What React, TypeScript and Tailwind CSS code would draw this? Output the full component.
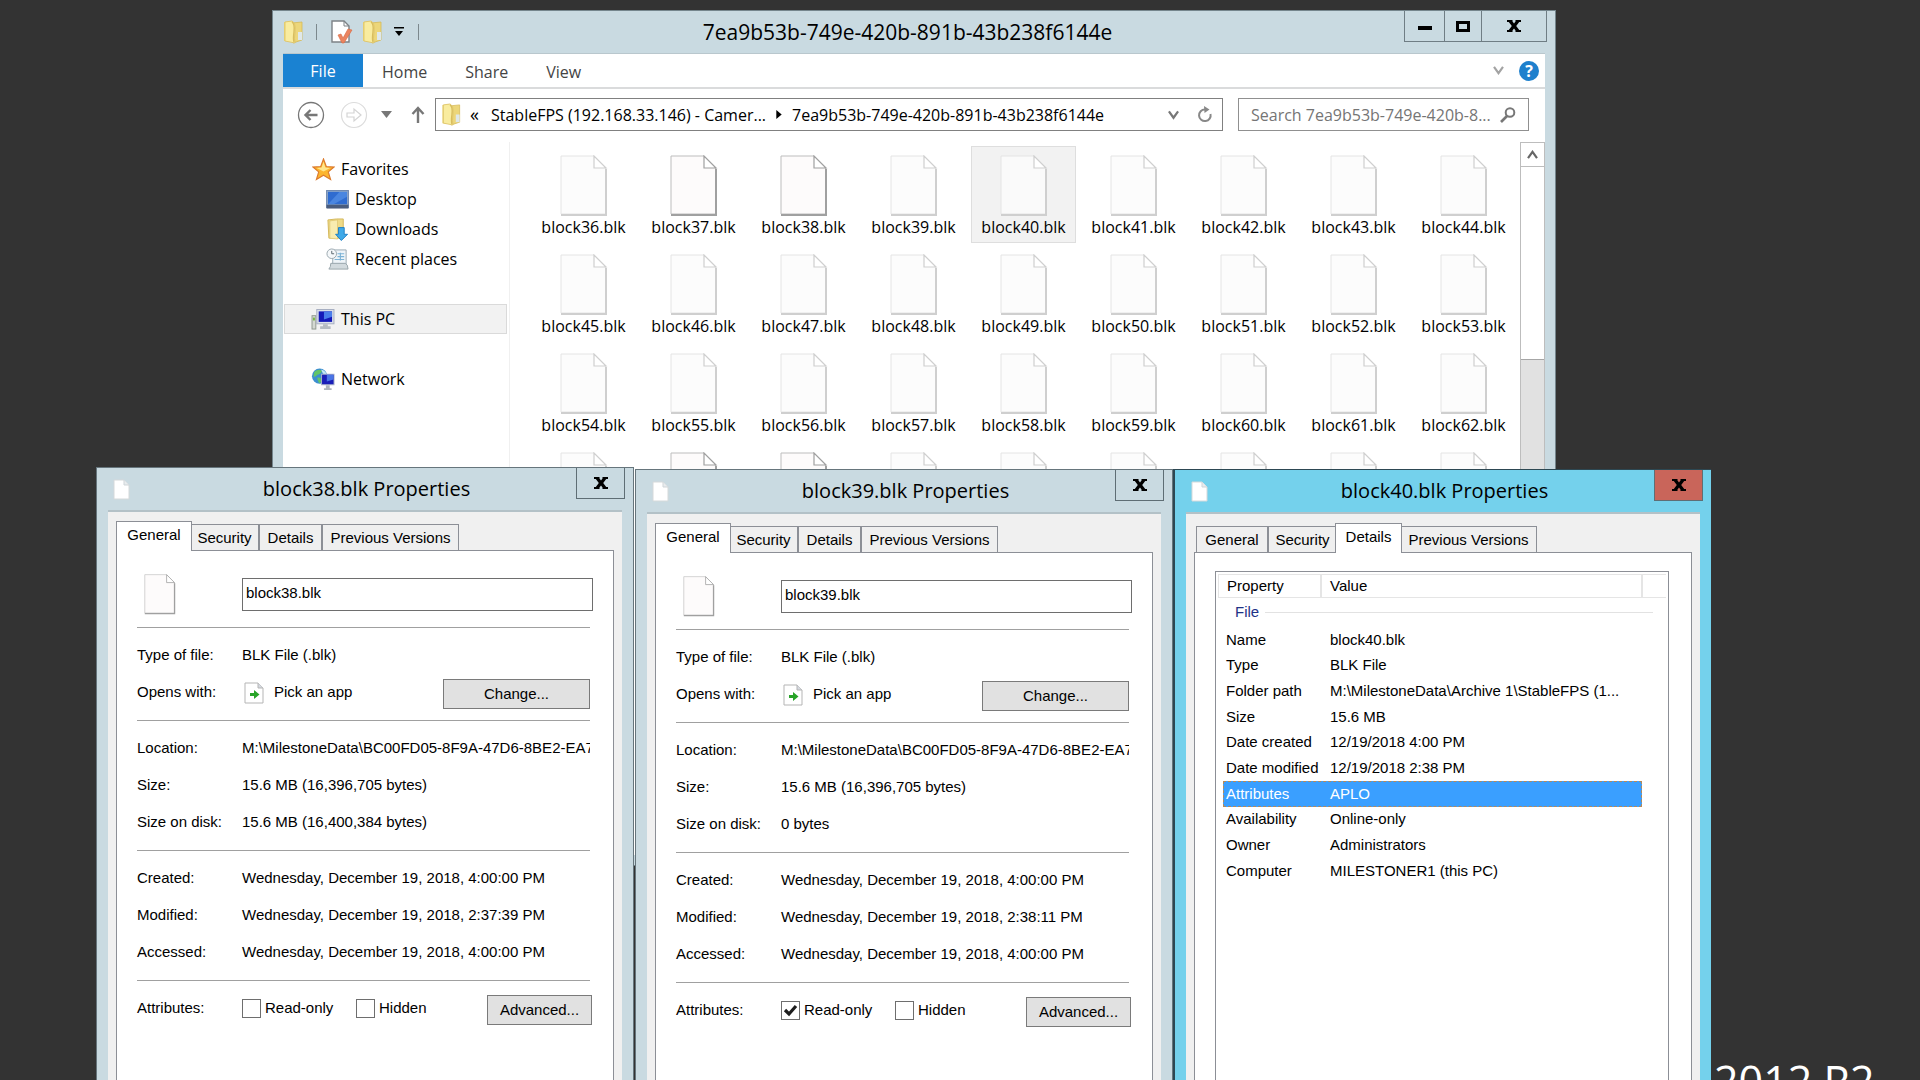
import type { ReactNode } from "react";

const UI = "font-['Open_Sans',sans-serif]";
const DLG = "font-['Liberation_Sans',sans-serif]";

function FolderIcon({ className = "" }: { className?: string }) {
  return (
    <svg viewBox="0 0 20 24" className={className} aria-hidden="true">
      <path d="M1 2 L8 1 V22 L1 21 Z" fill="#ecd678" />
      <path d="M9 3 L19 2 V20 L10 23 Z" fill="#ecd67a" stroke="#d6ba58" strokeWidth="0.8" />
      <path d="M15 12 H19 V20 H15 Z" fill="#dfe8ea" />
      <path d="M2 2 L9 1 Q13 3 12 12 Q11 19 12 23 L2 21 Z" fill="#f9ec9f" stroke="#dcc063" strokeWidth="0.8" />
      <path d="M9 2 Q12 4 11 12 Q10 19 11 22" fill="none" stroke="#d8bd5e" strokeWidth="1.4" />
    </svg>
  );
}

function PageIcon({ dark = false, className = "" }: { dark?: boolean; className?: string }) {
  const edge = dark ? "#a0a0a0" : "#cfcfcf";
  const soft = dark ? "#bdbdbd" : "#e4e4e4";
  return (
    <svg viewBox="0 0 48 62" className={className} aria-hidden="true">
      <path d="M1 1 H34 L46 14 V59 H1 Z" fill={dark ? "#fcfafa" : "#fbfbfb"} fillOpacity="0.8" stroke={soft} strokeWidth="1" />
      <path d="M46 14 V60 H1" fill="none" stroke={edge} strokeWidth="2" />
      <path d="M34 1 V13 H46 Z" fill="#fff" stroke={edge} strokeWidth="1.2" />
    </svg>
  );
}

function SmallPage() {
  return (
    <svg viewBox="0 0 17 21" className="h-[21px] w-[17px] shrink-0" aria-hidden="true">
      <path d="M1 1 H11 L16 6 V20 H1 Z" fill="#fff" stroke="#d5d9da" strokeWidth="1" />
      <path d="M11 1 V6 H16" fill="#e8ecee" stroke="#cfd5d8" strokeWidth="1" />
    </svg>
  );
}

function StarIcon() {
  return (
    <svg viewBox="0 0 24 24" className="h-[23px] w-[23px]" aria-hidden="true">
      <path d="M12 1 L15 9 L23 9.4 L17 14.5 L19.4 22.5 L12 18 L4.600 22.500 L7 14.500 L1 9.400 L9 9 Z" fill="#fcb52e" stroke="#dc7a2c" strokeWidth="1.2" />
      <path d="M12 4 L14 10 L19 10.500 L12 14 L5 10.500 L10 10 Z" fill="#ffe68c" />
    </svg>
  );
}

function DesktopIcon() {
  return (
    <svg viewBox="0 0 24 20" className="h-[19px] w-[23px]" aria-hidden="true">
      <rect x="0.500" y="0.500" width="23" height="18" fill="#8aa4c8" stroke="#6d86ad" />
      <rect x="2" y="2" width="20" height="13" fill="#2f6cd0" />
      <path d="M2 15 L14 2 H22 V7 L8 15 Z" fill="#4a86e0" />
      <rect x="0.500" y="15.500" width="23" height="4" fill="#4a5c7c" />
    </svg>
  );
}

function DownloadsIcon() {
  return (
    <svg viewBox="0 0 24 24" className="h-[23px] w-[23px]" aria-hidden="true">
      <path d="M2 2 L11 1 H18 V21 H3 Z" fill="#efdb88" stroke="#d3b75a" />
      <path d="M4 3 L12 2 V22 L4 21 Z" fill="#f8ecb0" stroke="#dcc36d" strokeWidth="0.700" />
      <path d="M13 10 H19 V17 H22.500 L16 23.500 L10 17 H13 Z" fill="#3fa9e8" stroke="#1f7fc4" />
    </svg>
  );
}

function RecentIcon() {
  return (
    <svg viewBox="0 0 24 24" className="h-[23px] w-[23px]" aria-hidden="true">
      <path d="M7 2 H21 V18 H7 Z" fill="#eef4f8" stroke="#9aa9b3" />
      <path d="M12 6 H19 M12 9 H19 M9 12 H19 M15 5 V13" stroke="#7db3d6" strokeWidth="1.200" />
      <path d="M5 16 H20 Q23 17 23 22 H3 Q5 20 5 16 Z" fill="#d2dade" stroke="#98a4aa" />
      <circle cx="6" cy="6" r="5" fill="#f5f8fa" stroke="#9aa6ae" />
      <path d="M6 3 V6 H8.500" fill="none" stroke="#59656d" />
    </svg>
  );
}

function PcIcon() {
  return (
    <svg viewBox="0 0 24 22" className="h-[21px] w-[24px]" aria-hidden="true">
      <rect x="0.500" y="7" width="4" height="14" fill="#d4d8d2" stroke="#8f978f" />
      <rect x="1.500" y="9" width="2" height="3" fill="#75b843" />
      <rect x="5.500" y="0.500" width="18" height="15" fill="#dbe0ea" stroke="#a5adc0" />
      <rect x="7.500" y="2.500" width="14" height="11" fill="#1519b8" />
      <path d="M13 2.500 H21.500 V8 L13 11 Z" fill="#4a7dea" />
      <path d="M12 16 H17 V18 H20 V21 H9 V18 H12 Z" fill="#b5bbc2" />
    </svg>
  );
}

function NetworkIcon() {
  return (
    <svg viewBox="0 0 24 24" className="h-[23px] w-[24px]" aria-hidden="true">
      <circle cx="8.500" cy="8.500" r="8" fill="#3c8fd0" />
      <path d="M3 4 Q8 0 11 3 Q9 7 6 7 Q4 10 2 9 Z M6 10 Q11 9 11 14 L8 16 Q6 13 6 10 Z" fill="#62c567" />
      <path d="M10 1.500 Q15 3 16 7 L12 6 Z" fill="#c5e8f4" />
      <rect x="10.500" y="6.500" width="13" height="11" fill="#1a1fb8" stroke="#a9b3c9" />
      <path d="M16 7 H23 V12 L16 14 Z" fill="#4975e6" />
      <path d="M15 18 H19 V21 H21 V23 H13 V21 H15 Z" fill="#aeb5bd" />
    </svg>
  );
}

function CloseGlyph() {
  return (
    <svg viewBox="0 0 14 12" className="h-[12px] w-[14px]" aria-hidden="true">
      <path d="M0 0 H5.500 V1.500 L7 3.600 L8.500 1.500 V0 H14 V2 H12.200 L9.200 6 L12.200 10 H14 V12 H8.500 V10.500 L7 8.400 L5.500 10.500 V12 H0 V10 H1.800 L4.800 6 L1.800 2 H0 Z" fill="#000" />
    </svg>
  );
}

function Chevron({ className = "" }: { className?: string }) {
  return (
    <svg viewBox="0 0 12 10" className={className} aria-hidden="true">
      <path d="M1 1 L6 8 L11 1" fill="none" stroke="currentColor" strokeWidth="2.400" />
    </svg>
  );
}

const namedFiles = Array.from({ length: 27 }, (_, i) => 36 + i);
const coveredFiles = Array.from({ length: 9 }, (_, i) => 63 + i);
const darkFiles = [37, 38, 64, 65];

function SideItem({ icon, label, nested = false, active = false }: { icon: ReactNode; label: string; nested?: boolean; active?: boolean }) {
  return (
    <button
      type="button"
      className={`flex h-[30px] w-full items-center gap-[6px] border text-left ${nested ? "pl-10" : "pl-[26px]"} ${
        active ? "border-[#dadada] bg-[#f2f2f2]" : "border-transparent"
      }`}
    >
      <span className="flex w-6 shrink-0 justify-center">{icon}</span>
      {label}
    </button>
  );
}

function Explorer() {
  return (
    <section
      aria-label="File Explorer"
      className={`absolute top-[10px] left-[272px] flex h-[856px] w-[1284px] flex-col border border-[#75868d] bg-[#c9dae1] pr-[10px] pb-[10px] pl-[10px] text-[16px] text-black ${UI}`}
    >
      <header className="flex h-[42px] shrink-0 items-start">
        <div className="flex h-[42px] items-center">
          <FolderIcon className="h-6 w-5" />
          <span className="ml-[13px] h-4 w-px bg-[#7c888d]" />
          <svg viewBox="0 0 22 24" className="ml-[14px] h-6 w-[22px]" aria-hidden="true">
            <path d="M1 1 H13 L18 6 V22 H1 Z" fill="#fff" stroke="#7d8286" strokeWidth="1.400" />
            <path d="M13 1 V6 H18" fill="none" stroke="#7d8286" />
            <path d="M7 15 L10 14 L12 18 L17 9 L21 10 L13 23 H11 Z" fill="#ea8460" stroke="#d9683f" strokeWidth="0.600" />
          </svg>
          <FolderIcon className="ml-[9px] h-6 w-5" />
          <svg viewBox="0 0 10 10" className="ml-3 h-[10px] w-[10px]" aria-hidden="true">
            <path d="M0 0 H10 V1.500 H0 Z M1 4 H9 L5 9 Z" fill="#000" />
          </svg>
          <span className="ml-[14px] h-4 w-px bg-[#7c888d]" />
        </div>
        <h1 className="flex-1 pr-[8px] text-center text-[21px] leading-[42px]">7ea9b53b-749e-420b-891b-43b238f6144e</h1>
        <div className="-mr-[2px] flex h-[31px] border-r border-b border-l border-[#6f7d84]">
          <button type="button" aria-label="Minimize" className="flex w-10 items-center justify-center border-r border-[#6f7d84] pt-1">
            <span className="h-1 w-[14px] bg-black" />
          </button>
          <button type="button" aria-label="Maximize" className="flex w-[37px] items-center justify-center border-r border-[#6f7d84]">
            <span className="h-[11px] w-[14px] border-[3px] border-black" />
          </button>
          <button type="button" aria-label="Close" className="flex w-[64px] items-center justify-center">
            <CloseGlyph />
          </button>
        </div>
      </header>

      <div className="flex min-h-0 flex-1 flex-col border-t border-[#b9c7cd] bg-white">
        <div className="flex h-[35px] shrink-0 items-stretch border-b-2 border-[#dadbdc] text-[#444]">
          <button type="button" className="w-20 bg-[#1a82d2] text-white">File</button>
          <button type="button" className="px-[19px] pt-[2px]">Home</button>
          <button type="button" className="px-[19px] pt-[2px]">Share</button>
          <button type="button" className="px-[19px] pt-[2px]">View</button>
          <div className="ml-auto flex items-center pr-[6px]">
            <button type="button" aria-label="Expand ribbon" className="text-[#a3a3a3]">
              <Chevron className="h-[9px] w-[11px]" />
            </button>
            <button
              type="button"
              aria-label="Help"
              className="ml-[15px] flex h-5 w-5 items-center justify-center rounded-full bg-[#1e80cd] text-[16px] leading-5 font-bold text-white"
            >
              ?
            </button>
          </div>
        </div>

        <div className="flex h-[53px] shrink-0 items-center pr-[16px] pb-[2px] pl-[14px]">
          <button type="button" aria-label="Back" className="h-7 w-7">
            <svg viewBox="0 0 28 28" aria-hidden="true">
              <circle cx="14" cy="14" r="12.500" fill="none" stroke="#777" strokeWidth="1.300" />
              <path d="M20.500 14 H9 M13.500 9 L8.500 14 L13.500 19" fill="none" stroke="#777" strokeWidth="2.400" />
            </svg>
          </button>
          <button type="button" aria-label="Forward" className="ml-[15px] h-7 w-7">
            <svg viewBox="0 0 28 28" aria-hidden="true">
              <circle cx="14" cy="14" r="12.500" fill="none" stroke="#dcdcdc" strokeWidth="1.200" />
              <path d="M7 12 H14 V8 L21 14 L14 20 V16 H7 Z" fill="none" stroke="#d4d4d4" strokeWidth="1.200" />
            </svg>
          </button>
          <button type="button" aria-label="Recent locations" className="ml-[13px]">
            <svg viewBox="0 0 11 7" className="h-[7px] w-[11px]" aria-hidden="true">
              <path d="M0 0 H11 L5.500 7 Z" fill="#777" />
            </svg>
          </button>
          <button type="button" aria-label="Up" className="ml-[19px]">
            <svg viewBox="0 0 14 17" className="h-[17px] w-[14px]" aria-hidden="true">
              <path d="M7 17 V2 M1.500 8 L7 2 L12.500 8" fill="none" stroke="#777" strokeWidth="2.400" />
            </svg>
          </button>
          <div className="ml-[10px] flex h-[33px] flex-1 items-center border border-[#808080] pr-[9px] pl-[5px]">
            <FolderIcon className="h-[23px] w-5" />
            <span className="ml-[9px] w-[21px] text-[18px]">«</span>
            <span>StableFPS (192.168.33.146) - Camer...</span>
            <svg viewBox="0 0 6 10" className="mx-[10px] h-[9px] w-[6px]" aria-hidden="true">
              <path d="M0 0 L6 5 L0 10 Z" fill="#000" />
            </svg>
            <span>7ea9b53b-749e-420b-891b-43b238f6144e</span>
            <button type="button" aria-label="Previous locations" className="ml-auto text-[#777]">
              <Chevron className="h-[10px] w-[11px]" />
            </button>
            <button type="button" aria-label="Refresh" className="ml-[18px]">
              <svg viewBox="0 0 16 17" className="h-[17px] w-4" aria-hidden="true">
                <path d="M8 3.500 A5.800 5.800 0 1 0 13.500 8" fill="none" stroke="#888" strokeWidth="2" />
                <path d="M7 0 L12.500 3.600 L7.500 7 Z" fill="#888" />
              </svg>
            </button>
          </div>
          <div className="ml-[15px] flex h-[33px] w-[291px] items-center border border-[#909090] pr-3 pl-3">
            <input
              type="text"
              aria-label="Search folder"
              placeholder="Search 7ea9b53b-749e-420b-8..."
              className="min-w-0 flex-1 bg-transparent outline-none placeholder:text-[#757575]"
            />
            <svg viewBox="0 0 16 16" className="h-4 w-4" aria-hidden="true">
              <circle cx="10" cy="5.500" r="4.300" fill="none" stroke="#777" strokeWidth="2" />
              <path d="M7 9 L1 15" stroke="#777" strokeWidth="2.600" />
            </svg>
          </div>
        </div>

        <div className="flex min-h-0 flex-1">
          <nav aria-label="Folders" className="w-[227px] shrink-0 border-r border-[#f0f0f0] pt-3 pr-[2px] pl-px">
            <SideItem icon={<StarIcon />} label="Favorites" />
            <SideItem nested icon={<DesktopIcon />} label="Desktop" />
            <SideItem nested icon={<DownloadsIcon />} label="Downloads" />
            <SideItem nested icon={<RecentIcon />} label="Recent places" />
            <div className="my-[30px]">
              <SideItem active icon={<PcIcon />} label="This PC" />
            </div>
            <SideItem icon={<NetworkIcon />} label="Network" />
          </nav>
          <ul className="grid flex-1 grid-cols-[repeat(9,105px)] content-start gap-x-[5px] gap-y-[2px] overflow-hidden pt-1 pl-[21px]">
            {namedFiles.map((n) => (
              <li
                key={n}
                className={`flex h-[97px] flex-col items-center border pt-2 ${
                  n === 40 ? "border-[#dedede] bg-[#f2f2f2]" : "border-transparent"
                }`}
              >
                <PageIcon dark={darkFiles.includes(n)} className="h-[62px] w-12 shrink-0" />
                <span className="leading-5">{`block${n}.blk`}</span>
              </li>
            ))}
            {coveredFiles.map((n) => (
              <li key={n} className="flex h-[97px] flex-col items-center border border-transparent pt-2">
                <PageIcon dark={darkFiles.includes(n)} className="h-[62px] w-12 shrink-0" />
              </li>
            ))}
          </ul>
          <div className="flex w-[25px] flex-col border border-[#bdbdbd]">
            <button type="button" aria-label="Scroll up" className="flex h-6 items-center justify-center border-b border-[#bdbdbd] text-[#666]">
              <Chevron className="h-[9px] w-[11px] rotate-180" />
            </button>
            <div className="h-[192px]" />
            <div className="flex-1 border-t border-[#a6a6a6] bg-[#e1e1e1]" />
          </div>
        </div>
      </div>
    </section>
  );
}

const tabs = [
  { name: "General", off: "w-[72px]", on: "w-[76px]" },
  { name: "Security", off: "w-[69px]", on: "w-[73px]" },
  { name: "Details", off: "w-[63px]", on: "w-[67px]" },
  { name: "Previous Versions", off: "w-[137px]", on: "w-[141px]" },
];

function Dialog({
  title,
  active,
  tab,
  place,
  children,
}: {
  title: string;
  active: boolean;
  tab: string;
  place: string;
  children: ReactNode;
}) {
  return (
    <section
      aria-label={title}
      className={`absolute bottom-0 flex flex-col border-t px-[11px] text-[15px] text-black ${place} ${DLG} ${
        active ? "border-l-2 border-[#2d4853] bg-[#74d1ec]" : "border-r border-l border-[#66757c] bg-[#c9dae1]"
      }`}
    >
      <header className="flex h-[42px] shrink-0 items-start">
        <div className="flex h-[42px] w-[49px] items-center pl-[5px]">
          <SmallPage />
        </div>
        <h2 className={`flex-1 text-center text-[20px] leading-[42px] ${UI}`}>{title}</h2>
        <button
          type="button"
          aria-label="Close"
          className={`-mr-[3px] flex h-[31px] w-[49px] items-center justify-center border-r border-b border-l border-[#5f6e75] ${
            active ? "bg-[#c9655a]" : ""
          }`}
        >
          <CloseGlyph />
        </button>
      </header>
      <div className="flex min-h-0 flex-1 flex-col border-t-2 border-[#b3c1c7] bg-[#f0f0f0] px-2 pt-[9px]">
        <div role="tablist" className="z-10 -mb-px flex h-[30px] shrink-0 items-end px-[2px]">
          {tabs.map(({ name, off, on }) => {
            const selected = name === tab;
            return (
              <button
                key={name}
                type="button"
                role="tab"
                aria-selected={selected}
                className={`border-t border-r border-l border-[#8c8f96] whitespace-nowrap ${
                  selected ? `z-10 -mx-[2px] h-[30px] bg-white pb-[3px] ${on}` : `mb-px h-[26px] bg-[#efefef] pt-px ${off}`
                }`}
              >
                {name}
              </button>
            );
          })}
        </div>
        <div className="min-h-0 flex-1 overflow-hidden border-t border-r border-l border-[#8c8f96] bg-white">{children}</div>
      </div>
    </section>
  );
}

function Row({ label, children }: { label: string; children: ReactNode }) {
  return (
    <div className="flex h-[37px] items-center">
      <span className="w-[105px] shrink-0">{label}</span>
      {children}
    </div>
  );
}

function Tick({ id, label, checked = false }: { id: string; label: string; checked?: boolean }) {
  return (
    <span className="flex items-center">
      <span className="relative flex h-[19px] w-[19px]">
        <input id={id} type="checkbox" defaultChecked={checked} className="peer h-[19px] w-[19px] appearance-none border border-[#6e6e6e] bg-white" />
        <svg viewBox="0 0 19 19" className="pointer-events-none absolute inset-0 hidden peer-checked:block" aria-hidden="true">
          <path d="M4 9 L8 13 L15 5" fill="none" stroke="#1d1d1d" strokeWidth="3.200" />
        </svg>
      </span>
      <label htmlFor={id} className="ml-1">{label}</label>
    </span>
  );
}

const push = "mt-[3px] h-[30px] border border-[#7a7a7a] bg-[#e1e1e1] text-center";

function GeneralTab({ file, disk, modified, readOnly }: { file: string; disk: string; modified: string; readOnly: boolean }) {
  return (
    <div className="pr-[23px] pl-5">
      <div className="flex h-[76px] items-start pt-[23px]">
        <PageIcon dark className="ml-[5px] h-[41px] w-[36px]" />
        <input
          type="text"
          aria-label="File name"
          defaultValue={file}
          className="mt-1 -mr-[3px] ml-auto h-[33px] w-[351px] border border-[#6e6e6e] bg-white px-[3px] pb-1"
        />
      </div>
      <div className="border-t border-[#a0a0a0] py-[9px]">
        <Row label="Type of file:">BLK File (.blk)</Row>
        <Row label="Opens with:">
          <svg viewBox="0 0 20 22" className="ml-[2px] h-[22px] w-5" aria-hidden="true">
            <path d="M1 1 H14 L19 6 V21 H1 Z" fill="#fff" stroke="#b5b5b5" />
            <path d="M14 1 V6 H19" fill="#d5d9e0" stroke="#b5b5b5" />
            <path d="M6 11 H10 V8 L15.500 12.500 L10 17 V14 H6 Z" fill="#28a428" />
          </svg>
          <span className="ml-[10px]">Pick an app</span>
          <button type="button" className={`ml-auto w-[147px] ${push}`}>Change...</button>
        </Row>
      </div>
      <div className="border-t border-[#a0a0a0] py-[9px]">
        <Row label="Location:">
          <span className="min-w-0 flex-1 overflow-hidden whitespace-nowrap">M:\MilestoneData\BC00FD05-8F9A-47D6-8BE2-EA7</span>
        </Row>
        <Row label="Size:">15.6 MB (16,396,705 bytes)</Row>
        <Row label="Size on disk:">{disk}</Row>
      </div>
      <div className="border-t border-[#a0a0a0] py-[9px]">
        <Row label="Created:">Wednesday, December 19, 2018, 4:00:00 PM</Row>
        <Row label="Modified:">{modified}</Row>
        <Row label="Accessed:">Wednesday, December 19, 2018, 4:00:00 PM</Row>
      </div>
      <div className="border-t border-[#a0a0a0] py-[9px]">
        <Row label="Attributes:">
          <div className="flex w-[114px]">
            <Tick id={`${file}-ro`} label="Read-only" checked={readOnly} />
          </div>
          <Tick id={`${file}-hidden`} label="Hidden" />
          <button type="button" className={`-mr-[2px] ml-auto w-[105px] ${push}`}>Advanced...</button>
        </Row>
      </div>
    </div>
  );
}

const details = [
  ["Name", "block40.blk"],
  ["Type", "BLK File"],
  ["Folder path", "M:\\MilestoneData\\Archive 1\\StableFPS (1..."],
  ["Size", "15.6 MB"],
  ["Date created", "12/19/2018 4:00 PM"],
  ["Date modified", "12/19/2018 2:38 PM"],
  ["Attributes", "APLO"],
  ["Availability", "Online-only"],
  ["Owner", "Administrators"],
  ["Computer", "MILESTONER1 (this PC)"],
];

function DetailsTab() {
  return (
    <div className="h-full pt-[18px] pr-[22px] pl-5">
      <div className="h-full border-t border-r border-l border-[#8c8f96] px-[2px] pt-[2px]">
        <div className="flex h-6 items-center border border-r-0 border-[#e5e5e5]">
          <span className="w-[103px] border-r-2 border-[#e5e5e5] pl-2">Property</span>
          <span className="w-[321px] border-r-2 border-[#e5e5e5] pl-2">Value</span>
        </div>
        <div className="flex h-[29px] items-center pr-[13px] pl-[17px] text-[#1e3287]">
          File
          <span className="ml-[6px] h-px flex-1 bg-[#e2e2e2]" />
        </div>
        <table className="ml-[5px] h-[257px] w-[419px] border-collapse">
          <tbody>
            {details.map(([k, v]) => (
              <tr key={k} className={k === "Attributes" ? "bg-[#3a9fff] text-white outline-1 -outline-offset-1 outline-dashed outline-[#b58a5a]" : ""}>
                <th scope="row" className="w-[104px] p-0 pl-[3px] text-left font-normal whitespace-nowrap">{k}</th>
                <td className="p-0 pl-[3px] whitespace-nowrap">{v}</td>
              </tr>
            ))}
          </tbody>
        </table>
      </div>
    </div>
  );
}

export default function App() {
  return (
    <main className="relative h-screen w-full overflow-hidden bg-[#333333]">
      <p className={`absolute top-[1051px] left-[1714px] text-[43px] leading-[60px] whitespace-nowrap text-white ${UI}`}>2012 R2</p>
      <Explorer />
      <Dialog title="block38.blk Properties" active={false} tab="General" place="top-[467px] left-[96px] w-[538px]">
        <GeneralTab file="block38.blk" disk="15.6 MB (16,400,384 bytes)" modified="Wednesday, December 19, 2018, 2:37:39 PM" readOnly={false} />
      </Dialog>
      <Dialog title="block39.blk Properties" active={false} tab="General" place="top-[469px] left-[635px] w-[538px]">
        <GeneralTab file="block39.blk" disk="0 bytes" modified="Wednesday, December 19, 2018, 2:38:11 PM" readOnly />
      </Dialog>
      <Dialog title="block40.blk Properties" active tab="Details" place="top-[469px] left-[1173px] w-[538px]">
        <DetailsTab />
      </Dialog>
    </main>
  );
}
